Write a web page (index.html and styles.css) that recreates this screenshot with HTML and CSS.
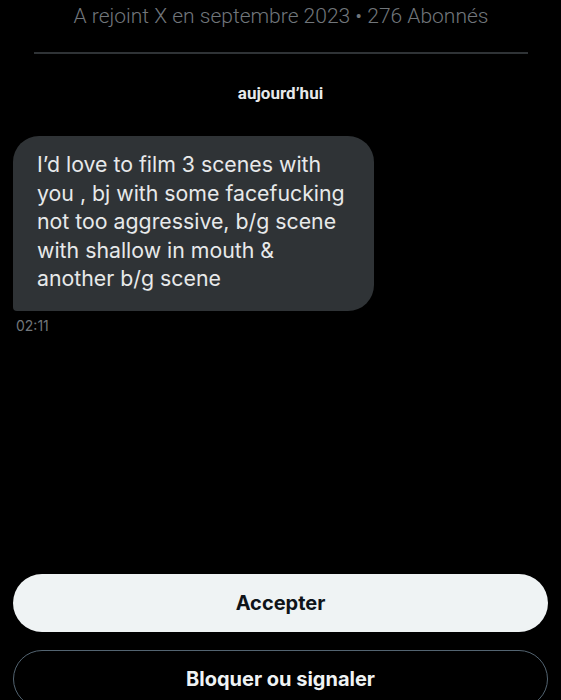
FILE: index.html
```html
<!DOCTYPE html>
<html lang="fr">
<head>
<meta charset="utf-8">
<link rel="stylesheet" href="styles.css">
</head>
<body>
<div class="page">
  <header class="profile">
    <p class="joined">A rejoint X en septembre 2023 • 276 Abonnés</p>
    <hr class="divider">
  </header>
  <section class="conversation">
    <p class="day">aujourd’hui</p>
    <div class="message">
      <div class="bubble">I’d love to film 3 scenes with<br>you , bj with some facefucking<br>not too aggressive, b/g scene<br>with shallow in mouth &amp;<br>another b/g scene</div>
      <div class="time">02:11</div>
    </div>
  </section>
  <footer class="actions">
    <button class="btn btn-accept">Accepter</button>
    <button class="btn btn-block">Bloquer ou signaler</button>
  </footer>
</div>
</body>
</html>
```
FILE: styles.css
```css
* { box-sizing: border-box; }
html, body { margin: 0; padding: 0; background: #000; }
body { font-family: Inter, Roboto, "Noto Sans", sans-serif; color: #e7e9ea; }
.page { width: 561px; height: 700px; overflow: hidden; display: flex; flex-direction: column; }
.profile { padding: 2px 33px 0 34px; }
.joined { margin: 0; text-align: center; font-family: Roboto, sans-serif; font-size: 21px; font-weight: 300; color: #71767b; line-height: 28px; white-space: nowrap; }
.divider { border: 0; height: 2px; background: #2f3336; margin: 22px 0 0; }
.conversation { flex: 1; padding: 0 13px; }
.day { margin: 27px 0 0; text-align: center; font-family: Roboto, sans-serif; font-weight: 700; font-size: 17px; line-height: 24px; color: #e7e9ea; }
.message { margin-top: 31px; display: flex; flex-direction: column; align-items: flex-start; }
.bubble { width: 361px; background: #2f3336; border-radius: 26px 26px 26px 4px; padding: 14px 16px 18px 24px; font-size: 21.3px; line-height: 28.5px; color: #e7e9ea; white-space: nowrap; }
.time { margin: 6px 0 0 3px; font-size: 14px; color: #71767b; }
.actions { padding: 0 13px; display: flex; flex-direction: column; gap: 18px; margin-bottom: -8px; }
.btn { width: 535px; height: 58px; border-radius: 29px; font-family: Inter, Roboto, sans-serif; font-weight: 700; font-size: 20px; }
.btn-accept { background: #eff3f4; color: #0f1419; border: 0; }
.btn-block { background: #000; color: #eff3f4; border: 1px solid #536471; }
```
